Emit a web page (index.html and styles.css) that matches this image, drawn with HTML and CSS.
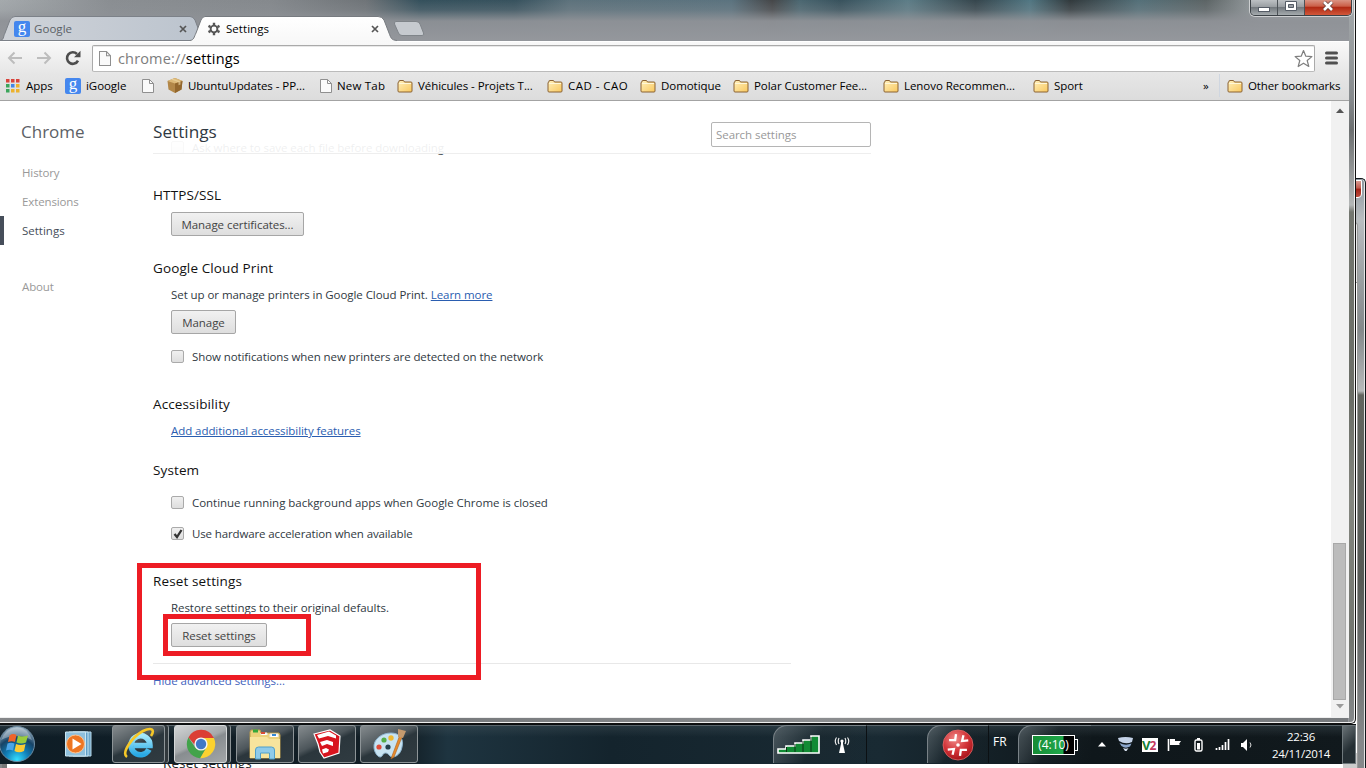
FILE: index.html
```html
<!DOCTYPE html>
<html lang="en">
<head>
  <meta charset="UTF-8">
  <title>Settings</title>
  <link rel="stylesheet" href="styles.css">
</head>
<body>
<svg width="0" height="0" class="defs">
  <defs>
    <linearGradient id="folderFill" x1="0" y1="0" x2="1" y2="1"><stop offset="0" stop-color="#fff0bd"/><stop offset="1" stop-color="#f9c85e"/></linearGradient>
    <linearGradient id="tabOff" x1="0" y1="0" x2="1" y2="0"><stop offset="0" stop-color="#cfd3d9"/><stop offset="1" stop-color="#bcc4ce"/></linearGradient>
    <linearGradient id="tabOn" x1="0" y1="0" x2="0" y2="1"><stop offset="0" stop-color="#fff"/><stop offset="1" stop-color="#f8f8f8"/></linearGradient>
    <radialGradient id="orb" cx=".5" cy=".95" r=".95"><stop offset="0" stop-color="#35e0ff"/><stop offset=".35" stop-color="#117fb8"/><stop offset=".65" stop-color="#174366"/><stop offset="1" stop-color="#a7bccb"/></radialGradient>
    <radialGradient id="redBall" cx=".4" cy=".3" r=".7"><stop offset="0" stop-color="#f08a88"/><stop offset=".6" stop-color="#d23338"/><stop offset="1" stop-color="#a8161c"/></radialGradient>
    <linearGradient id="ieBlue" x1="0" y1="0" x2="0" y2="1"><stop offset="0" stop-color="#a5e8fb"/><stop offset="1" stop-color="#29a9e4"/></linearGradient>
    <symbol id="folder" viewBox="0 0 16 14">
      <path d="M1 12V4q0-1 1-1V2q0-.5.5-.5h4L7.500 3H14q1 0 1 1V12q0 1-1 1H2q-1 0-1-1z" fill="url(#folderFill)" stroke="#8a6234"/>
      <path d="M2 4.500h12" stroke="#fff7d8"/>
    </symbol>
    <symbol id="page" viewBox="0 0 12 14">
      <path d="M.5.500h7l4 4v9H.5z" fill="#fafafa" stroke="#8f8f8f"/>
      <path d="M7.500.500v4h4" fill="none" stroke="#8f8f8f"/>
    </symbol>
    <symbol id="cross" viewBox="0 0 8 8"><path d="M1 1l6 6M7 1L1 7" stroke="#565656" stroke-width="1.700"/></symbol>
  </defs>
</svg>

<div class="desktop">
  <!-- second browser window, behind -->
  <div class="back-window">
    <div class="back-close"></div>
    <div class="back-content">
      <div class="back-text">Reset settings</div>
      <div class="back-scroll"></div>
    </div>
  </div>

  <div class="window">
    <div class="caption">
      <span><svg width="12" height="6"><rect x=".5" y="1.500" width="11" height="4" fill="#fff" stroke="#555c66"/></svg></span>
      <span><svg width="12" height="11"><path d="M.5.500h11v9H.5z" fill="#fff" stroke="#555c66"/><path d="M3.500 3.500h5v3h-5z" fill="#9a9fa5" stroke="#555c66"/></svg></span>
      <span class="close"><svg width="12" height="11"><path d="M2 1l8 8M10 1L2 9" stroke="#5d3936" stroke-width="4"/><path d="M2 1l8 8M10 1L2 9" stroke="#fff" stroke-width="2.600"/></svg></span>
    </div>

    <div class="tabs">
      <div class="tab tab-google">
        <svg class="shape" width="198" height="25"><path d="M0 24.500C4 24 3 21 5 17L10 4Q11.500.500 15 .5H190Q193 .5 195 4L198 12V24.500z" fill="url(#tabOff)" stroke="#7c8188"/></svg>
        <div class="tab-body"><b class="g-icon">g</b><span>Google</span><svg class="x" width="8" height="8"><use href="#cross"/></svg></div>
      </div>
      <div class="tab tab-settings">
        <svg class="shape" width="208" height="26"><path d="M0 26V24.500C4 24 4 21 6 17L11 4Q12.500.500 15 .5H188Q192 .5 194 4L199 17C201 22 201 24 207 24.500V26z" fill="url(#tabOn)"/><path d="M0 24.500C4 24 4 21 6 17L11 4Q12.500.500 15 .5H188Q192 .5 194 4L199 17C201 22 201 24 207 24.500" fill="none" stroke="#777b80"/></svg>
        <div class="tab-body"><svg width="14" height="14" viewBox="-7 -7 14 14"><circle r="3.400" fill="none" stroke="#555" stroke-width="1.900"/><path d="M0-6.300V-4M0 6.300V4M-5.500-3.150L-3.500-2M5.500 3.150L3.500 2M-5.500 3.150L-3.500 2M5.500-3.150L3.500-2" stroke="#555" stroke-width="2.400"/></svg><span>Settings</span><svg class="x" width="8" height="8"><use href="#cross"/></svg></div>
      </div>
      <svg class="new-tab" width="32" height="16"><path d="M2 .5H22Q25 .5 26 3L29.500 12Q30.500 14.500 28 14.500H8Q5.500 14.500 4.500 12L.5 3Q0 .5 2 .5z" fill="#c6cacf" stroke="#7f8489"/></svg>
    </div>

    <div class="toolbar">
      <svg width="16" height="14"><path d="M15 7H2M7.500 1.500L2 7l5.500 5.500" fill="none" stroke="#bdbdbd" stroke-width="2"/></svg>
      <svg width="16" height="14"><path d="M1 7h13M8.500 1.500L14 7l-5.500 5.500" fill="none" stroke="#bdbdbd" stroke-width="2"/></svg>
      <svg width="16" height="16"><path d="M13 10.600A5.800 5.800 0 1 1 12 4" fill="none" stroke="#4d4d4d" stroke-width="2.600"/><path d="M15.500 .8V7.300H9z" fill="#4d4d4d"/></svg>
      <div class="omnibox">
        <svg width="12" height="15" viewBox="0 0 12 14" preserveAspectRatio="none"><use href="#page"/></svg>
        <span class="url"><i>chrome://</i>settings</span>
        <svg width="19" height="19" viewBox="0 0 19 19"><path d="M9.500 1.500l2.300 5.700 6.100.4-4.700 3.900 1.600 6-5.300-3.300-5.300 3.300 1.600-6L1.100 7.600l6.100-.4z" fill="#fff" stroke="#7f7f7f" stroke-width="1.200" stroke-linejoin="round"/></svg>
      </div>
      <svg class="menu" width="13" height="14"><path d="M1.500 2h10M1.500 7h10M1.500 12h10" stroke="#505050" stroke-width="3" stroke-linecap="round"/></svg>
    </div>

    <div class="bookmarks">
      <div><svg width="14" height="14"><path d="M0 0h3.500v3.500H0zM5 0h3.500v3.500H5zM10 0h3.500v3.500h-3.500z" fill="#d9433b"/><path d="M0 5h3.500v3.500H0zM0 10h3.500v3.500H0z" fill="#3ba55b"/><path d="M5 5h3.500v3.500H5z" fill="#4285e8"/><path d="M10 5h3.500v3.500h-3.500zM5 10h3.500v3.500H5zM10 10h3.500v3.500h-3.500z" fill="#ecb22e"/></svg><span>Apps</span></div>
      <div><b class="g-icon">g</b><span>iGoogle</span></div>
      <div><svg width="12" height="14"><use href="#page"/></svg></div>
      <div><svg width="16" height="15"><path d="M8 0l7.500 3-1 8.500L8 15 1.500 11.500.500 3z" fill="#b28748"/><path d="M8 0l7.500 3L8 5.500.500 3z" fill="#dcb978"/><path d="M8 5.500V15l6.500-3.500 1-8.500z" fill="#93672d"/><path d="M4 1.600L11.500 4.300v3l2-.8v-3L6 .8z" fill="#ead3a0" opacity=".7"/></svg><span>UbuntuUpdates - PP...</span></div>
      <div><svg width="12" height="14"><use href="#page"/></svg><span class="new">New Tab</span></div>
      <div><svg width="16" height="14"><use href="#folder"/></svg><span>Véhicules - Projets T...</span></div>
      <div><svg width="16" height="14"><use href="#folder"/></svg><span class="cad">CAD - CAO</span></div>
      <div><svg width="16" height="14"><use href="#folder"/></svg><span>Domotique</span></div>
      <div><svg width="16" height="14"><use href="#folder"/></svg><span>Polar Customer Fee...</span></div>
      <div><svg width="16" height="14"><use href="#folder"/></svg><span>Lenovo Recommen...</span></div>
      <div><svg width="16" height="14"><use href="#folder"/></svg><span>Sport</span></div>
      <div>»</div>
      <div class="other"><svg width="16" height="14"><use href="#folder"/></svg><span>Other bookmarks</span></div>
    </div>

    <div class="page">
      <nav class="sidebar">
        <h1>Chrome</h1>
        <a>History</a>
        <a>Extensions</a>
        <a class="current">Settings</a>
        <a class="about">About</a>
      </nav>
      <main class="content">
        <header class="page-header"><h1>Settings</h1><div class="search">Search settings</div></header>
        <div class="row ask"><i class="box"></i><span>Ask where to save each file before downloading</span></div>
        <section>
          <h3>HTTPS/SSL</h3>
          <button class="cert">Manage certificates...</button>
        </section>
        <section class="print">
          <h3>Google Cloud Print</h3>
          <p class="setup">Set up or manage printers in Google Cloud Print. <a>Learn more</a></p>
          <button class="manage">Manage</button>
          <div class="row"><i class="box"></i><span>Show notifications when new printers are detected on the network</span></div>
        </section>
        <section class="access">
          <h3>Accessibility</h3>
          <p><a>Add additional accessibility features</a></p>
        </section>
        <section class="system">
          <h3>System</h3>
          <div class="row"><i class="box"></i><span>Continue running background apps when Google Chrome is closed</span></div>
          <div class="row second"><i class="box"><svg width="12" height="12"><path d="M2.500 6l2.500 3 4.500-7" fill="none" stroke="#333" stroke-width="2.300"/></svg></i><span>Use hardware acceleration when available</span></div>
        </section>
        <section class="reset">
          <h3>Reset settings</h3>
          <p class="restore">Restore settings to their original defaults.</p>
          <button class="reset-button">Reset settings</button>
        </section>
        <a class="advanced">Hide advanced settings...</a>
      </main>
      <div class="scrollbar">
        <svg width="8" height="5"><path d="M0 5h8L4 .5z" fill="#555"/></svg>
        <div class="thumb"></div>
        <svg width="8" height="5"><path d="M0 0h8L4 4.500z" fill="#9a9a9a"/></svg>
      </div>
    </div>
  </div>

  <div class="mark mark-outer"></div>
  <div class="mark mark-inner"></div>

  <div class="taskbar">
    <svg class="start" width="37" height="38"><circle cx="18" cy="19" r="17.500" fill="url(#orb)" stroke="#6d8ca2"/><path d="M2 15Q17 7 33 15Q28 2 17.500 2.500T2 15z" fill="#fff" opacity=".3"/><path d="M10.500 10.500Q14 8 17.500 10L16 17Q12.500 15.500 9 17z" fill="#f0642a"/><path d="M19 10.500Q23 12.500 29 10.500L27 17.500Q22 19.500 17.500 17.500z" fill="#9acc3c"/><path d="M8.500 18.500Q12 17 15.500 18.500L14 25.500Q10.500 24 7 25.500z" fill="#4ba5e8"/><path d="M17 19Q21.500 21 26.500 19L25 26Q20 28.500 15.500 26z" fill="#fccb34"/></svg>
    <svg class="wmp" width="28" height="28"><path d="M8 2h18v24H8z" fill="#6fa6c8" stroke="#b8d9ea"/><path d="M4 2h19v24H4z" fill="#5f9dc6" stroke="#c4e4f2"/><path d="M.5 2h20v24H.5z" fill="#8fc0dc" stroke="#cbe6f2"/><circle cx="10.500" cy="14" r="9" fill="#ee7623" stroke="#ffc18d"/><path d="M7.500 8.500v11l9-5.500z" fill="#fff"/></svg>
    <div class="task stack"><svg width="34" height="34" viewBox="0 0 34 34"><path d="M27 22.500A9.500 9.500 0 1 1 28 18.500H12" fill="none" stroke="url(#ieBlue)" stroke-width="5.600"/><path d="M5 30C-1 26 10 10 21 4C30-.5 33 3 29 9" fill="none" stroke="#f6c728" stroke-width="2.600"/></svg></div>
    <div class="task stack active"><svg width="30" height="30" viewBox="-15 -15 30 30"><path d="M-12.600-6.500A14.200 14.200 0 0 1 12.900-6H0Q-5-5-6 1z" fill="#db3f34"/><path d="M12.900-6A14.200 14.200 0 0 1-1 14.200L5.500 3Q6-2 2-6z" fill="#fbd22f"/><path d="M-12.600-6.500A14.200 14.200 0 0 0-1 14.200L5 4Q-1 7-5.500 4z" fill="#42a34a"/><circle r="6.600" fill="#f5f5f5"/><circle r="5.200" fill="#4178c6"/></svg></div>
    <div class="task"><svg width="34" height="32"><path d="M2 30V4l1-2h9l1 3h18l1 2v23z" fill="#ecd27c" stroke="#b99b4c"/><path d="M5 3h5" stroke="#35a83b" stroke-width="3"/><path d="M13 7V5h6v2M22 9V6h8v3" fill="#fff" stroke="#e8e8e8"/><path d="M13 5h4" stroke="#d94c35" stroke-width="2"/><path d="M24 7h4" stroke="#3489d5" stroke-width="2"/><path d="M2 9h17l2 2h11v19H2z" fill="#f7e49d"/><path d="M7.500 31V22q0-3 3-3h13q3 0 3 3v9h-5v-6h-9v6z" fill="#8fcbe9" stroke="#4f9fca"/></svg></div>
    <div class="task"><svg width="28" height="30"><path d="M1 5L17 1l10 6-1 17-15 5-4-6-2-8z" fill="#d8141e" stroke="#fff" stroke-width="1.200"/><path d="M4 6l12-3.500 7 4v3L15 7 6 9.500zM7 13l7-2 6 2v4l-6-2-5 2zM9 20.500l4-1.500 3 1.500-1 2.500-5 1.500z" fill="#fff"/></svg></div>
    <div class="task"><svg width="34" height="32"><path d="M2 20C1 11 10 5 19 5S32 11 30 19C29 27 21 31 18 28C15 24 12 24 10 28C8 31 3 27 2 20z" fill="#c8e3f2" stroke="#8db4ce"/><circle cx="7" cy="19" r="2.600" fill="#df4b3a"/><circle cx="12" cy="12" r="2.600" fill="#56ad48"/><circle cx="19" cy="10" r="2.700" fill="#f0b932"/><circle cx="16" cy="19" r="2.600" fill="#24404e"/><path d="M27.500 8L20 28l-1 3 3-2 8-20z" fill="#e88a2c" stroke="#a8601c" stroke-width=".6"/><path d="M26 1l8 2-3 7-5-1z" fill="#c59a6e"/></svg></div>

    <div class="band network">
      <svg width="43" height="19"><path d="M1 18v-4h8v-3h9V8h8V5h8V1h8v17z" fill="#118b34" stroke="#fff" stroke-width="1.600"/><path d="M9.500 12v5M18 9v8M26 6v11M34 2v15" stroke="#0a3514"/></svg>
      <svg width="16" height="16"><path d="M8 5v6" stroke="#fff" stroke-width="2"/><path d="M7 7h2l2 9H5z" fill="#fff"/><circle cx="8" cy="4" r="1.600" fill="#fff"/><path d="M5 1Q3.500 4 5 7M2.500.5Q0 4 2.500 8M11 1q1.500 3 0 6M13.500.5Q16 4 13.500 8" fill="none" stroke="#eee" stroke-width="1.200"/></svg>
    </div>
    <div class="band ball"><svg width="32" height="32" viewBox="-16 -16 32 32"><circle r="15" fill="url(#redBall)" stroke="#e26a6a" stroke-width=".8"/><circle r="1.800" fill="#fff"/><path d="M-3.500-10.500L-3.500-4.500-9.500-3.500M4-10.500L3.500-4.500 9.500-6M3.500 10.500L3.500 4.500 9.500 3.500M-4 10.500L-3.500 4.500-9.500 6" fill="none" stroke="#fff" stroke-width="2.300" transform="rotate(8)"/></svg></div>
    <span class="lang">FR</span>
    <div class="band power"><div class="battery">(4:10)</div><i class="battery-tip"></i></div>
    <div class="tray">
      <svg width="8" height="5"><path d="M0 4.500h8L4 0z" fill="#fff"/></svg>
      <svg width="15" height="15"><path d="M0 1Q7.500-1 15 1l-1 4Q7.500 8 1 4z" fill="#c5d3e8"/><path d="M1.500 6Q7.500 9 13.500 6.500l-1.500 3Q7.500 12 3.500 9z" fill="#8ba6cc"/><path d="M5 11q3 1.500 5.500 0L8.500 14H7z" fill="#d8e2f0"/></svg>
      <b class="v2">V<i>2</i></b>
      <svg width="15" height="14"><path d="M1.500 1v12" stroke="#fff" stroke-width="1.600"/><path d="M3 1h5v2h6l-2 3 1 1H8V7H3z" fill="#fff"/></svg>
      <svg class="plug" width="9" height="14"><path d="M3 0h3v2H3z" fill="#fff"/><rect x="1" y="2" width="7" height="11" rx="1.500" fill="none" stroke="#fff" stroke-width="1.400"/><path d="M3 5h3v6.500H3z" fill="#fff"/></svg>
      <svg width="15" height="12"><path d="M1.500 9v2M4.500 8v3M7.500 6v5M10.500 3v8M13.500 0v11" stroke="#fff" stroke-width="1.700"/></svg>
      <svg width="12" height="12"><path d="M0 4h2l4-4v12L2 8H0z" fill="#fff"/><path d="M9 3.500q2 2.500 0 5" fill="none" stroke="#ddd"/></svg>
    </div>
    <div class="clock"><span>22:36</span><span>24/11/2014</span></div>
    <div class="show-desktop"></div>
  </div>
</div>
</body>
</html>
```
FILE: styles.css
```css
* { box-sizing: border-box; }
body { margin: 0; background: #fff; font-family: "Open Sans", "Noto Sans", sans-serif; font-size: 11.5px; letter-spacing: -0.06px; color: #303942; }
svg { display: block; flex: none; }
h1, h3, p { margin: 0; font-weight: normal; }
.defs { position: absolute; }
.desktop { position: relative; width: 1366px; height: 768px; overflow: hidden; background: #fff; }

/* windows */
.back-window { position: absolute; left: 0; top: 178px; width: 1366px; height: 640px; border: 1px solid #10161a; border-width: 1px 1px 0 0; border-radius: 0 5px 0 0; background: linear-gradient(#8c969e, #b9bdc0 40px, #83888a 150px, #b7baba 212px, #62655f 216px, #565955 400px, #85888a 560px); padding: 43px 7px 0 2px; box-shadow: inset -1px 0 #e4e4e4; }
.back-close { position: absolute; right: 3px; top: 1px; width: 12px; height: 18px; border: 1px solid #fff; border-radius: 0 0 4px 0; background: linear-gradient(#d99a90, #c0584b 45%, #a22318 50%, #bd4b3c); }
.back-content { height: 100%; background: linear-gradient(#e8e8e8 59px, #999 59px, #999 60px, #fff 60px); border: 1px solid #999; border-left: 5px solid #777; padding: 530px 0 0 156px; display: flex; justify-content: space-between; border-radius: 0 4px 0 0; }
.back-text { font-size: 13.5px; letter-spacing: 0.1px; color: #222; line-height: 20px; }
.back-scroll { width: 14px; background: #ccc; }

.window { position: absolute; left: 0; top: 0; width: 1356px; height: 724px; border-right: 1px solid #111; border-bottom: 1px solid #111; border-radius: 0 0 5px 0; padding: 16px 6px 0 0; box-shadow: inset -1px -1px #eee;
  background:
    linear-gradient(90deg, #858789, #6d7073 20%, #8b8d8f 60%, #76797c) 0 718px / 1348px 4px no-repeat,
    linear-gradient(#eee, #eee) 0 717px / 1349px 1px no-repeat,
    linear-gradient(#a4a9ac, #95999b 60px, #85898c 100px, #6c6f70 130px, #b4b7b7 205px, #73766f 212px, #6a6d66 400px, #84867f 500px, #72756f 640px, #85888a) 1349px 0 / 5px 723px no-repeat,
    linear-gradient(transparent, rgba(145,149,154,.25) 10px, rgba(143,146,151,.95) 21px, #94979c 40px),
    linear-gradient(90deg, #a5aaad, #8a8e92 8%, #85898d 20%, #6f7478 27%, #34505c 31%, #37525e 38%, #5d727c 42%, #5b737f 54%, #454648 57%, #4b6771 59%, #38525d 62%, #5d7d87 67%, #35454c 72%, #517783 76%, #31393c 79%, #547079 84%, #5c6465 89%, #9ba1a4 93%); }

.caption { position: absolute; left: 1250px; top: -1px; display: flex; height: 17px; border: 1px solid #3c4247; border-top: 0; border-radius: 0 0 5px 5px; box-shadow: 0 0 0 1px rgba(255,255,255,.55); overflow: hidden; }
.caption span { width: 27px; display: flex; align-items: center; justify-content: center; background: linear-gradient(#c1c5c8, #9a9fa3 48%, #72787d 52%, #a5abae); border-right: 1px solid #4c5257; }
.caption span svg { margin-top: -2px; }
.caption span:first-child svg { margin-top: 4px; }
.caption .close { width: 46px; border: 0; background: linear-gradient(#dc9c8d, #cb5f48 45%, #b02a14 52%, #d2573a); }

/* tab strip */
.tabs { display: flex; height: 25px; }
.tab { display: grid; height: 25px; }
.tab .shape, .tab-body { grid-area: 1 / 1; }
.tab .shape { overflow: visible; }
.tab-google { width: 190px; color: #5a5f66; }
.tab-settings { width: 204px; color: #000; }
.tab-body { position: relative; display: flex; align-items: center; padding: 0 0 0 14px; gap: 4px; width: 187px; height: 25px; }
.tab-body span { letter-spacing: 0.05px; }
.tab-settings .tab-body { padding-left: 17px; gap: 5px; width: 189px; }
.tab-body .x { margin-left: auto; }
.new-tab { margin-top: 5px; }
.g-icon { flex: none; width: 16px; height: 16px; background: #4587ee; color: #fff; border-radius: 2px; font: 17px/11px "Liberation Serif", serif; text-align: center; }

.toolbar { display: flex; align-items: center; height: 33px; padding: 0 11px 0 7px; border-top: 1px solid #fff; background: linear-gradient(#f9f9f9, #e6e6e6); width: 1349px; gap: 13px; }
.toolbar svg:nth-child(3) { margin-right: -2px; }
.omnibox { flex: 1; height: 27px; border: 1px solid #aaa; border-bottom-color: #bbb; border-radius: 2px; background: #fff; display: flex; align-items: center; padding: 0 3px 0 6px; box-shadow: inset 0 1px #e8e8e8; }
.url { flex: 1; font-size: 14.500px; letter-spacing: 0.15px; padding-left: 7px; color: #000; }
.url i { font-style: normal; color: #7d7d7d; }
.toolbar .menu { margin: 0 0 0 -3px; }

.bookmarks { display: grid; grid-template-columns: 59px 77px 25px 153px 77px 150px 93px 93px 150px 150px 170px 16px 1fr; width: 1349px; height: 27px; padding: 0 0 3px 6px; background: linear-gradient(#e6e6e6, #dcdcdc); border-bottom: 1px solid #a3a3a3; color: #000; white-space: nowrap; }
.bookmarks div { display: flex; align-items: center; gap: 5px; }
.bookmarks div:first-child { gap: 6px; }
.bookmarks .new { letter-spacing: 0.2px; }
.bookmarks .cad { letter-spacing: 0.45px; }
.bookmarks .other { border-left: 1px solid #cfd6e0; padding-left: 7px; letter-spacing: -0.14px; }

/* settings page */
.page { position: relative; display: flex; width: 1349px; height: 616px; background: #fff; }
.sidebar { width: 153px; padding-top: 17px; display: flex; flex-direction: column; }
.sidebar h1 { font-size: 17px; line-height: 28px; letter-spacing: 0; color: #5c6166; padding-left: 21px; margin-bottom: 12px; }
.sidebar a { height: 29px; line-height: 30px; padding-left: 22px; color: #999; letter-spacing: -0.12px; }
.sidebar .current { color: #464e5a; border-left: 4px solid #464e5a; padding-left: 18px; letter-spacing: 0; }
.sidebar .about { margin-top: 27px; }
.content { flex: 1; padding-top: 36px; }
.page-header { position: absolute; left: 153px; top: 0; width: 718px; height: 53px; border-bottom: 1px solid #eee; background: rgba(255,255,255,.92); display: flex; justify-content: space-between; padding-top: 17px; }
.page-header h1 { font-size: 17.200px; line-height: 28px; letter-spacing: 0; }
.search { width: 160px; height: 25px; margin-top: 4px; border: 1px solid #b5b5b5; border-radius: 2px; line-height: 24px; padding-left: 4px; color: #999; background: #fff; }
.row { display: flex; align-items: center; height: 20px; padding-left: 18px; gap: 8px; }
.box { width: 13px; height: 13px; border: 1px solid #aaa; border-radius: 2px; background: linear-gradient(#f0f0f0, #dedede); }
section { margin-top: 28px; display: flex; flex-direction: column; align-items: flex-start; }
h3 { font-size: 13.500px; line-height: 20px; height: 20px; color: #111; margin-bottom: 7px; letter-spacing: 0.12px; }
p { height: 20px; line-height: 20px; padding-left: 18px; margin-bottom: 5px; }
p a { color: #2a5db0; text-decoration: underline; }
button { margin-left: 18px; width: 133px; height: 24px; padding: 0; border: 1px solid #a6a6a6; border-radius: 2px; background: linear-gradient(#f1f1f1, #dedede); font: inherit; letter-spacing: inherit; color: #444; }
.print { margin-top: 22px; }
.manage { width: 65px; }
.print .row { margin-top: 12px; letter-spacing: -0.09px; }
.system { margin-top: 14px; }
.system .row { margin-top: 5px; letter-spacing: -0.03px; }
.system .second { margin-top: 11px; letter-spacing: -0.13px; }
.reset-button { width: 96px; }
.advanced { display: block; margin-top: 16px; width: 638px; border-top: 1px solid #e8e8e8; padding-top: 7px; line-height: 20px; color: #3f62bd; }
.scrollbar { width: 18px; background: #f1f1f1; display: flex; flex-direction: column; align-items: center; padding: 7px 1px 8px 0; }
.thumb { width: 13px; height: 157px; flex: none; margin-top: auto; margin-bottom: 4px; background: #bcbcbc; border: 1px solid #a8a8a8; }

/* red annotations over the page */
.mark { position: absolute; border: 5px solid #ed1c24; }
.mark-outer { left: 137px; top: 563px; width: 344px; height: 117px; }
.mark-inner { left: 163px; top: 614px; width: 148px; height: 42px; }

/* taskbar */
.taskbar { position: absolute; left: 0; top: 724px; width: 1356px; height: 40px; display: flex; align-items: flex-start; border-top: 1px solid #0a0d0f; box-shadow: inset 0 1px #59646a; color: #fff; background: linear-gradient(rgba(80,95,102,.35), transparent 12px), linear-gradient(90deg, #0e1d26, #131f26 30%, #1e3440 33%, #14242d 45%, #192a33 65%, #0f171b 80%, #11191d); }
.start { margin-left: -1px; }
.wmp { margin: 5px 19px 0 29px; }
.task { width: 58px; height: 38px; margin-right: 4px; border: 1px solid #8d9497; border-radius: 3px; display: flex; align-items: center; justify-content: center; background: linear-gradient(155deg, #858b8e, #4d565b 42%, #2b363c 52%, #303b41); }
.stack { width: 53px; margin-right: 9px; box-shadow: 3px 0 #30383c, 4px 0 #8d9497; }
.active { background: linear-gradient(155deg, #d2d4d5, #a5a9ab 45%, #888d90 52%, #a3a7a9); border-color: #d5d8d9; }
.band { height: 38px; display: flex; align-items: center; border-left: 1px solid #798287; border-top: 1px solid #798287; border-right: 1px solid #0b1013; border-radius: 14px 0 0 0; background: linear-gradient(120deg, rgba(110,120,125,.6), rgba(30,40,45,.3) 45%, transparent); }
.network { width: 94px; margin-left: 351px; padding-left: 3px; gap: 14px; }
.ball { width: 62px; margin-left: 60px; padding-left: 14px; }
.lang { width: 29px; padding: 9px 0 0 4px; font-size: 12px; line-height: 16px; }
.power { width: 73px; padding-left: 13px; border-right: 0; }
.battery { width: 43px; height: 20px; border: 1px solid #fff; background: linear-gradient(90deg, #168c36, #1fa84a 30px, #000 31px); text-align: center; font-size: 12px; line-height: 18px; }
.battery-tip { width: 3px; height: 12px; border: 1px solid #fff; border-left: 0; }
.tray { display: flex; align-items: center; gap: 9px; height: 39px; padding-left: 7px; }
.tray svg:first-child { margin-right: 3px; }
.tray .plug { margin: 0 3px; }
.tray svg:last-child { margin-left: 2px; }
.v2 { width: 16px; height: 14px; background: #fff; color: #178034; font-size: 13px; line-height: 14px; letter-spacing: -1px; }
.v2 i { color: #c33760; font-style: normal; font-size: 12px; }
.clock { width: 72px; display: flex; flex-direction: column; align-items: center; margin-left: auto; margin-right: 5px; padding-top: 3px; line-height: 17px; letter-spacing: -0.3px; }
.show-desktop { width: 14px; height: 39px; border: 1px solid #6f787c; background: linear-gradient(135deg, #697276, #252f34 60%); }
```
